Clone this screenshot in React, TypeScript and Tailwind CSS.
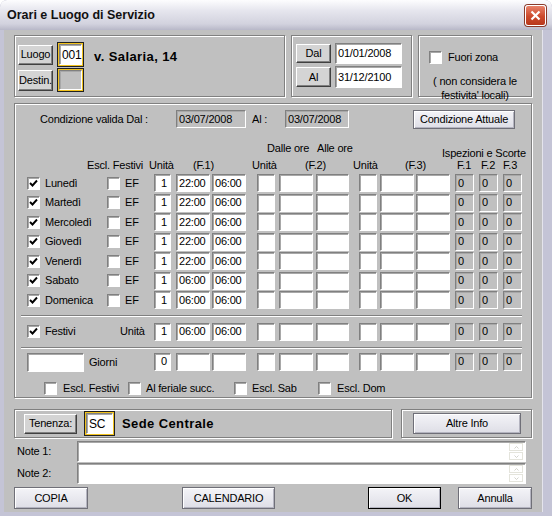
import React from 'react';

const sunken =
  'border border-t-[#808080] border-l-[#808080] border-b-white border-r-white shadow-[inset_1px_1px_0_#a8a8a8]';
const etched = 'border border-[#808080] shadow-[inset_1px_1px_0_#fff,1px_1px_0_#fff]';
const raised =
  'border border-t-white border-l-white border-b-[#404040] border-r-[#404040] shadow-[inset_-1px_-1px_0_#808080] bg-[#d4d4d4]';
const xpBtn =
  'border border-[#6f6f78] bg-[linear-gradient(180deg,#f4f4f8,#dedee6)] shadow-[inset_1px_1px_0_#fff,inset_-1px_-1px_0_#b4b4c0]';

function Box({
  w,
  h = 'h-[18px]',
  v = '',
  gray = false,
  right = false,
}: {
  w: string;
  h?: string;
  v?: string;
  gray?: boolean;
  right?: boolean;
}) {
  return (
    <div
      className={`${w} ${h} shrink-0 ${gray ? 'bg-[#c0c0c0]' : 'bg-white'} ${sunken} flex items-center ${
        right ? 'justify-end pr-[3px]' : 'pl-[2px]'
      } text-[11px] leading-none`}
    >
      {v}
    </div>
  );
}

function Check({ on = false }: { on?: boolean }) {
  return (
    <div className={`w-[13px] h-[13px] shrink-0 bg-white ${sunken} flex items-center justify-center`}>
      {on && (
        <svg width="9" height="9" viewBox="0 0 9 9">
          <polyline points="1,4 3.5,6.5 8,1.5" fill="none" stroke="#000" strokeWidth="1.9" />
        </svg>
      )}
    </div>
  );
}

function YellowBox({ w, h, v = '', gray = false }: { w: string; h: string; v?: string; gray?: boolean }) {
  return (
    <div className={`${w} ${h} shrink-0 border border-[#202020] bg-[#f2c21c] p-[1px] flex`}>
      <div
        className={`flex-1 ${gray ? 'bg-[#c0c0c0]' : 'bg-white'} ${sunken} flex items-center pl-[2px] text-[12px] leading-none`}
      >
        {v}
      </div>
    </div>
  );
}

function TimeCells({ u, a = '', b = '' }: { u: string; a?: string; b?: string }) {
  return (
    <>
      <div className="w-[22px] shrink-0">
        <Box w="w-[17px]" v={u} right />
      </div>
      <div className="w-[36px] shrink-0">
        <Box w="w-[34px]" v={a} />
      </div>
      <div className="w-[45px] shrink-0">
        <Box w="w-[34px]" v={b} />
      </div>
      <div className="w-[22px] shrink-0">
        <Box w="w-[18px]" />
      </div>
      <div className="w-[37px] shrink-0">
        <Box w="w-[34px]" />
      </div>
      <div className="w-[43px] shrink-0">
        <Box w="w-[33px]" />
      </div>
      <div className="w-[21px] shrink-0">
        <Box w="w-[18px]" />
      </div>
      <div className="w-[36px] shrink-0">
        <Box w="w-[34px]" />
      </div>
      <div className="w-[39px] shrink-0">
        <Box w="w-[34px]" />
      </div>
      <div className="w-[24px] shrink-0">
        <Box w="w-[19px]" v="0" gray />
      </div>
      <div className="w-[24px] shrink-0">
        <Box w="w-[19px]" v="0" gray />
      </div>
      <Box w="w-[19px]" v="0" gray />
    </>
  );
}

const days = [
  { d: 'Lunedì', a: '22:00' },
  { d: 'Martedì', a: '22:00' },
  { d: 'Mercoledì', a: '22:00' },
  { d: 'Giovedì', a: '22:00' },
  { d: 'Venerdì', a: '22:00' },
  { d: 'Sabato', a: '06:00' },
  { d: 'Domenica', a: '06:00' },
];

function NoteBox() {
  return (
    <div className={`w-[449px] h-[21px] bg-white ${sunken} flex justify-end items-center pr-[2px]`}>
      <div className="flex flex-col gap-[1px]">
        <div className="w-[14px] h-[8px] border border-[#e4e4dc] flex items-center justify-center">
          <svg width="5" height="3" viewBox="0 0 5 3">
            <polyline points="0.5,2.5 2.5,0.5 4.5,2.5" fill="none" stroke="#c8c8c0" strokeWidth="0.8" />
          </svg>
        </div>
        <div className="w-[14px] h-[8px] border border-[#e4e4dc] flex items-center justify-center">
          <svg width="5" height="3" viewBox="0 0 5 3">
            <polyline points="0.5,0.5 2.5,2.5 4.5,0.5" fill="none" stroke="#c8c8c0" strokeWidth="0.8" />
          </svg>
        </div>
      </div>
    </div>
  );
}

export default function App() {
  return (
    <div className="w-[552px] h-[516px] bg-[#c4c4d6] rounded-t-[7px] flex flex-col font-['Liberation_Sans',Arial,sans-serif] text-[11px] tracking-[-0.2px] text-black overflow-hidden">
      {/* Title bar */}
      <div className="h-[30px] shrink-0 rounded-t-[7px] bg-[linear-gradient(180deg,#fdfdfe_0%,#e6e6ee_35%,#d2d2de_80%,#b8b8c8_100%)] flex items-center pl-[7px] pr-[6px]">
        <span className="text-[12.5px] font-bold tracking-normal text-[#111]">Orari e Luogo di Servizio</span>
        <div className="ml-auto w-[21px] h-[21px] rounded-[3px] border border-white bg-[linear-gradient(180deg,#e8826a,#cc4a2c_55%,#b8381c)] shadow-[0_0_0_1px_#8a3a2a] flex items-center justify-center">
          <svg width="11" height="11" viewBox="0 0 11 11">
            <path d="M1.5 1.5 L9.5 9.5 M9.5 1.5 L1.5 9.5" stroke="#fff" strokeWidth="2.2" />
          </svg>
        </div>
      </div>

      {/* Body */}
      <div className="flex-1 ml-[4px] mr-[9px] mb-[4px] bg-[#c0c0c0] border-r border-[#e4e4ec] pl-[10px] pt-[5px] flex flex-col">
        {/* Top groups */}
        <div className="flex gap-[6px] h-[62px]">
          <div className={`${etched} w-[271px] pl-[3px] pt-[6px] flex items-start`}>
            <div className="flex flex-col gap-[1px]">
              <div className="flex items-center gap-[4px]">
                <div className={`${raised} w-[35px] h-[20px] flex items-center justify-center`}>Luogo</div>
                <YellowBox w="w-[27px]" h="h-[25px]" v="001" />
              </div>
              <div className="flex items-center gap-[4px]">
                <div className={`${raised} w-[35px] h-[21px] flex items-center justify-center`}>Destin.</div>
                <YellowBox w="w-[27px]" h="h-[24px]" gray />
              </div>
            </div>
            <span className="ml-[10px] mt-[5px] text-[13px] font-bold tracking-[0.4px]">v. Salaria, 14</span>
          </div>

          <div className={`${etched} w-[121px] pl-[4px] pt-[7px] flex flex-col gap-[2px]`}>
            <div className="flex items-center gap-[4px]">
              <div className={`${raised} w-[35px] h-[19px] flex items-center justify-center`}>Dal</div>
              <Box w="w-[67px]" h="h-[21px]" v="01/01/2008" />
            </div>
            <div className="flex items-center gap-[4px]">
              <div className={`${raised} w-[35px] h-[20px] flex items-center justify-center`}>Al</div>
              <Box w="w-[67px]" h="h-[22px]" v="31/12/2100" />
            </div>
          </div>

          <div className={`${etched} w-[114px] flex flex-col items-center pt-[13px]`}>
            <div className="flex items-center gap-[6px] self-start ml-[10px]">
              <Check />
              <span>Fuori zona</span>
            </div>
            <span className="mt-[8px] leading-[14px]">( non considera le</span>
            <span className="leading-[14px]">festivita' locali)</span>
          </div>
        </div>

        {/* Main group */}
        <div className={`${etched} mt-[6px] w-[518px] h-[295px] flex flex-col`}>
          <div className="flex items-center h-[18px] mt-[6px] ml-[12px]">
            <span className="w-[149px] shrink-0 pl-[13px]">Condizione valida Dal :</span>
            <Box w="w-[70px]" v="03/07/2008" gray />
            <span className="w-[33px] shrink-0 ml-[6px]">Al :</span>
            <Box w="w-[64px]" v="03/07/2008" gray />
            <div className={`${xpBtn} ml-[64px] w-[102px] h-[19px] flex items-center justify-center`}>
              Condizione Attuale
            </div>
          </div>

          {/* headers */}
          <div className="flex items-start h-[13px] mt-[14px] ml-[12px] leading-[13px]">
            <span className="w-[240px] shrink-0" />
            <span className="w-[50px] shrink-0 whitespace-nowrap">Dalle ore</span>
            <span className="w-[125px] shrink-0 whitespace-nowrap">Alle ore</span>
            <span className="mt-[5px] whitespace-nowrap">Ispezioni e Scorte</span>
          </div>
          <div className="flex items-start h-[13px] mt-[4px] ml-[12px] leading-[13px] whitespace-nowrap">
            <span className="w-[60px] shrink-0" />
            <span className="w-[62px] shrink-0">Escl. Festivi</span>
            <span className="w-[44px] shrink-0">Unità</span>
            <span className="w-[59px] shrink-0">(F.1)</span>
            <span className="w-[53px] shrink-0">Unità</span>
            <span className="w-[48px] shrink-0">(F.2)</span>
            <span className="w-[52px] shrink-0">Unità</span>
            <span className="w-[52px] shrink-0">(F.3)</span>
            <span className="w-[24px] shrink-0">F.1</span>
            <span className="w-[22px] shrink-0">F.2</span>
            <span>F.3</span>
          </div>

          {/* day rows */}
          <div className="mt-[2px] ml-[12px] flex flex-col">
            {days.map((r) => (
              <div key={r.d} className="flex items-start h-[19.5px]">
                <div className="w-[80px] shrink-0 flex items-center h-[18px] gap-[5px]">
                  <Check on />
                  <span>{r.d}</span>
                </div>
                <div className="w-[47px] shrink-0 flex items-center h-[18px] gap-[5px]">
                  <Check />
                  <span>EF</span>
                </div>
                <TimeCells u="1" a={r.a} b="06:00" />
              </div>
            ))}
          </div>

          <div className="mt-[4px] ml-[6px] w-[501px] h-[2px] border-t border-[#808080] border-b border-b-white" />

          {/* Festivi */}
          <div className="mt-[6px] ml-[12px] flex items-start">
            <div className="w-[80px] shrink-0 flex items-center h-[18px] gap-[5px]">
              <Check on />
              <span>Festivi</span>
            </div>
            <div className="w-[47px] shrink-0 flex items-center h-[18px] pl-[13px]">Unità</div>
            <TimeCells u="1" a="06:00" b="06:00" />
          </div>

          <div className="mt-[6px] ml-[6px] w-[501px] h-[2px] border-t border-[#808080] border-b border-b-white" />

          {/* Giorni */}
          <div className="mt-[4px] ml-[12px] flex items-start">
            <div className="w-[127px] shrink-0 flex items-center gap-[5px]">
              <Box w="w-[57px]" h="h-[19px]" />
              <span>Giorni</span>
            </div>
            <TimeCells u="0" />
          </div>

          <div className="mt-[10px] ml-[29px] flex items-center h-[13px]">
            <div className="w-[84px] shrink-0 flex items-center gap-[6px]">
              <Check />
              <span>Escl. Festivi</span>
            </div>
            <div className="w-[106px] shrink-0 flex items-center gap-[5px]">
              <Check />
              <span>Al feriale succ.</span>
            </div>
            <div className="w-[84px] shrink-0 flex items-center gap-[5px]">
              <Check />
              <span>Escl. Sab</span>
            </div>
            <div className="flex items-center gap-[6px]">
              <Check />
              <span>Escl. Dom</span>
            </div>
          </div>
        </div>

        {/* Tenenza */}
        <div className="flex gap-[9px] mt-[11px] h-[29px]">
          <div className={`${etched} w-[378px] flex items-center pl-[9px]`}>
            <div className={`${raised} w-[53px] h-[20px] flex items-center justify-center`}>Tenenza:</div>
            <div className="ml-[7px]">
              <YellowBox w="w-[31px]" h="h-[25px]" v="SC" />
            </div>
            <span className="ml-[7px] text-[13px] font-bold tracking-[0.4px]">Sede Centrale</span>
          </div>
          <div className={`${etched} w-[131px] flex items-center pl-[11px]`}>
            <div className={`${xpBtn} w-[108px] h-[21px] flex items-center justify-center`}>Altre Info</div>
          </div>
        </div>

        {/* Notes */}
        <div className="mt-[3px] flex items-center">
          <span className="w-[63px] pl-[3px] shrink-0">Note 1:</span>
          <NoteBox />
        </div>
        <div className="mt-[1px] flex items-center">
          <span className="w-[63px] pl-[3px] shrink-0">Note 2:</span>
          <NoteBox />
        </div>

        {/* Buttons */}
        <div className="mt-[3px] flex items-center h-[22px]">
          <div className={`${xpBtn} w-[74px] h-[22px] flex items-center justify-center`}>COPIA</div>
          <div className={`${xpBtn} ml-[94px] w-[93px] h-[22px] flex items-center justify-center`}>CALENDARIO</div>
          <div className={`${xpBtn} ml-[93px] w-[73px] h-[22px] flex items-center justify-center border-black shadow-[inset_0_0_0_1px_#6f6f78,inset_2px_2px_0_#fff]`}>
            OK
          </div>
          <div className={`${xpBtn} ml-[17px] w-[74px] h-[22px] flex items-center justify-center`}>Annulla</div>
        </div>
      </div>
    </div>
  );
}
